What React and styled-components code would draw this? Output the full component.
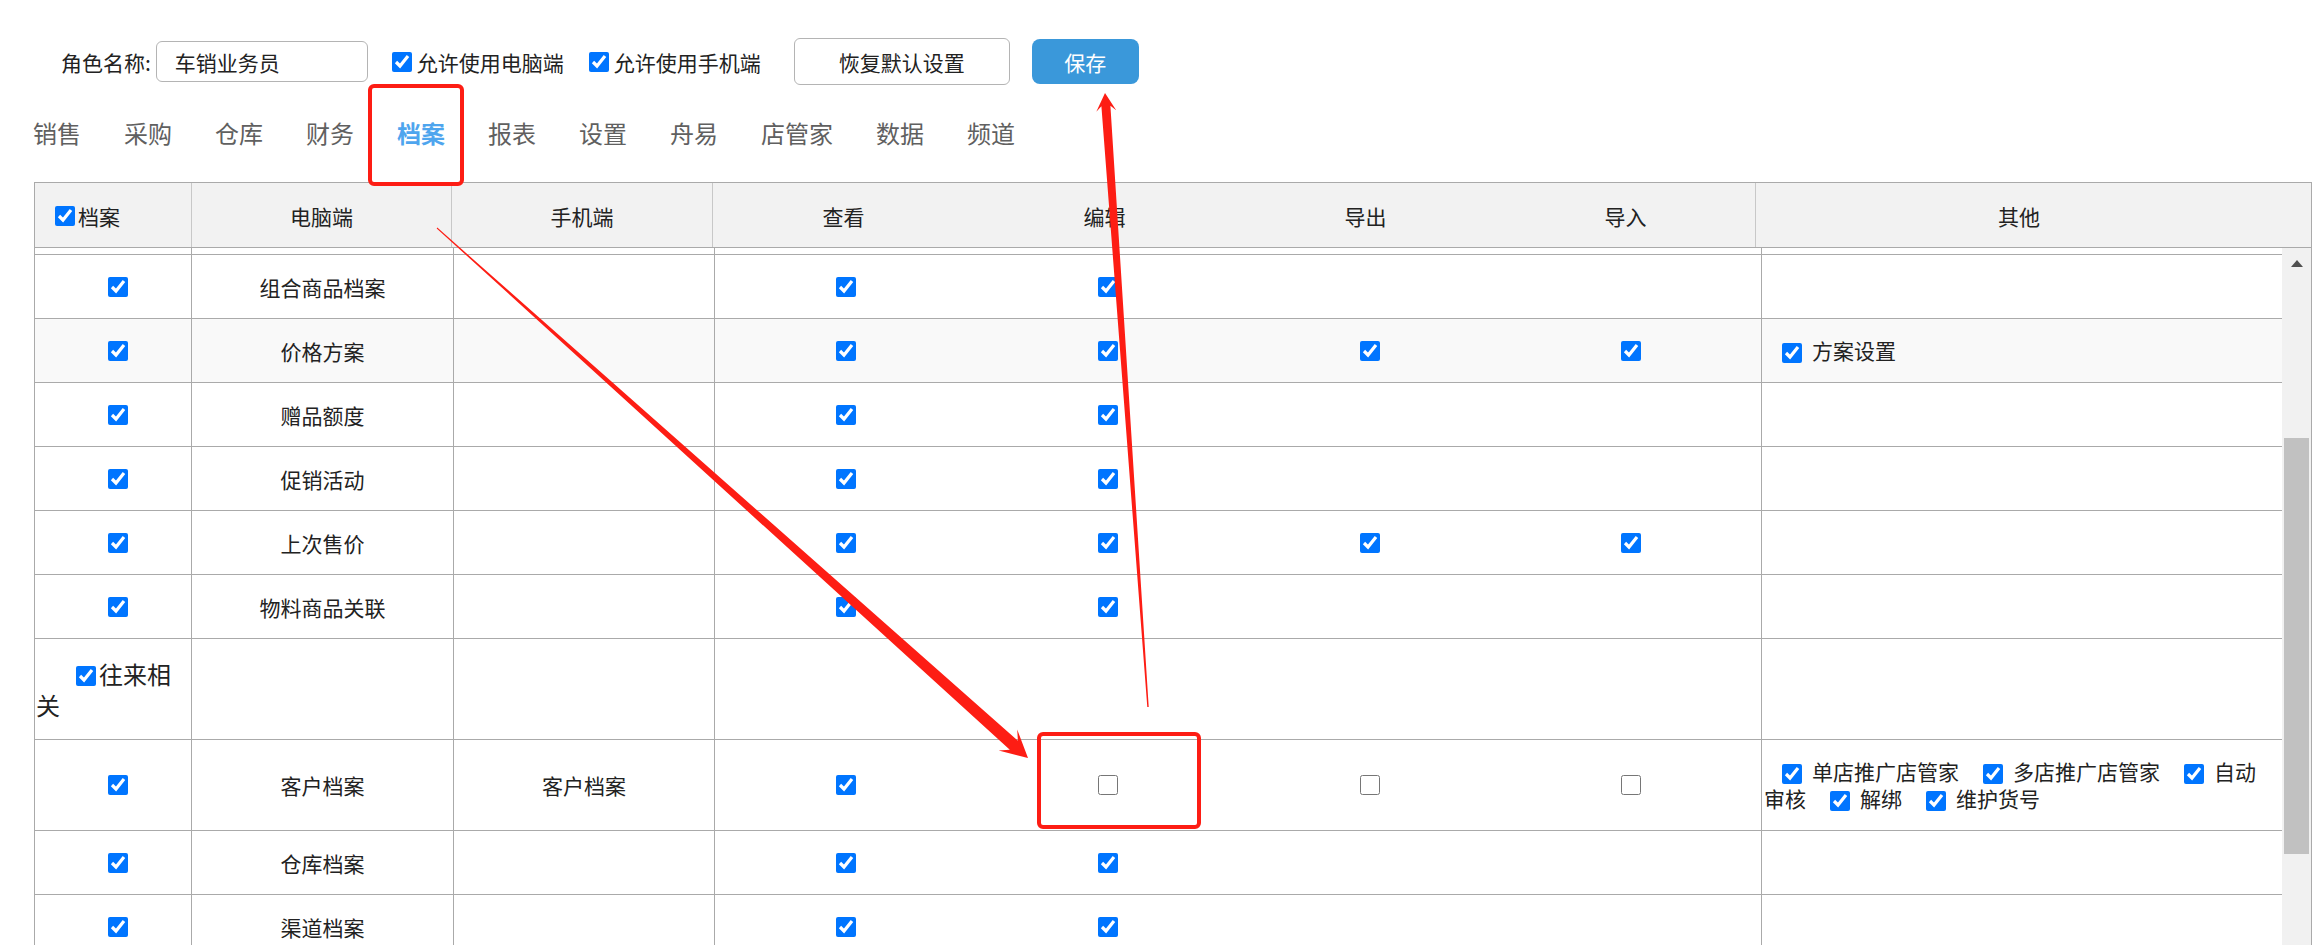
import React, { useLayoutEffect, useRef } from "react";
import styled, { createGlobalStyle } from "styled-components";

const GlobalStyle = createGlobalStyle`
  html, body {
    margin: 0;
    padding: 0;
    overflow: hidden;
    background: #fff;
  }
  body {
    font-family: "Noto Sans CJK SC", "Noto Sans", sans-serif;
    color: #222;
  }
  * {
    box-sizing: border-box;
  }
`;

const Page = styled.div`
  position: relative;
  width: 2318px;
  height: 945px;
  overflow: hidden;
`;

const Toolbar = styled.div`
  display: flex;
  align-items: center;
  height: 47px;
  margin-top: 38px;
  padding-left: 61px;
  font-size: 21px;
  color: #222;
`;

const FieldLabel = styled.span`
  margin-right: 5px;
`;

const NameInput = styled.input`
  width: 212px;
  height: 41px;
  padding: 0 18px;
  border: 1px solid #b4b4b4;
  border-radius: 6px;
  font: inherit;
  color: #222;
  outline: none;
`;

const Check = styled.input.attrs({ type: "checkbox", readOnly: true })`
  width: 20px;
  height: 20px;
  margin: 0;
  flex-shrink: 0;
  accent-color: #0075ff;
`;

const OptionLabel = styled.label`
  display: flex;
  align-items: center;
  gap: 5px;
  margin-left: ${(p) => p.$ml}px;
`;

const ResetButton = styled.button`
  width: 216px;
  height: 47px;
  margin-left: 33px;
  border: 1px solid #b4b4b4;
  border-radius: 6px;
  background: #fff;
  font: inherit;
  color: #222;
`;

const SaveButton = styled.button`
  width: 107px;
  height: 45px;
  margin-left: 22px;
  border: none;
  border-radius: 8px;
  background: #3a98da;
  font: inherit;
  color: #fff;
`;

const Tabs = styled.div`
  display: flex;
  align-items: center;
  gap: 43px;
  height: 97px;
  padding: 0 0 3px 33px;
  font-size: 24px;
`;

const Tab = styled.div`
  color: ${(p) => (p.$active ? "#4ea5ee" : "#606060")};
  font-weight: ${(p) => (p.$active ? 700 : 400)};
`;

const Table = styled.div`
  width: 2278px;
  margin-left: 34px;
  border: 1px solid #aaa;
  border-bottom: none;
  font-size: 21px;
`;

const HeadRow = styled.div`
  display: grid;
  grid-template-columns: 157px 260px 261px 261px 261px 261px 260px 1fr;
  height: 65px;
  background: #f2f2f2;
  border-bottom: 1px solid #aaa;
`;

const HeadCell = styled.div`
  display: flex;
  align-items: center;
  justify-content: ${(p) => (p.$left ? "flex-start" : "center")};
  gap: 3px;
  padding: 2px ${(p) => p.$pr || 0}px 0 ${(p) => (p.$left ? 20 : 0)}px;
  border-right: ${(p) => (p.$line ? "1px solid #c8c8c8" : "none")};
`;

const Body = styled.div`
  display: flex;
  height: 697px;
`;

const Viewport = styled.div`
  flex: 1;
  overflow: hidden;
`;

const Row = styled.div`
  display: grid;
  grid-template-columns: 157px 262px 261px 262px 262px 262px 261px 1fr;
  height: ${(p) => p.$h}px;
  background: ${(p) => (p.$shade ? "#f9f9f9" : "#fff")};
  border-bottom: 1px solid #aaa;
`;

const Cell = styled.div`
  display: flex;
  align-items: center;
  justify-content: center;
  min-width: 0;
  padding-left: ${(p) => p.$pl || 0}px;
  border-right: ${(p) => (p.$line ? "1px solid #aaa" : "none")};
`;

const GroupCell = styled(Cell)`
  justify-content: flex-start;
  padding: 0 0 0 1px;
  font-size: 24px;
  line-height: 31px;
`;

const GroupCheck = styled(Check)`
  display: inline-block;
  margin: 0 3px 0 40px;
  vertical-align: -2px;
`;

const ExtraCell = styled(Cell)`
  justify-content: flex-start;
  padding: 0 8px 0 2px;
  line-height: 27px;
`;

const ExtraItem = styled.span`
  margin-left: 24px;
  &:first-child {
    margin-left: 18px;
  }
`;

const ExtraCheck = styled(Check)`
  display: inline-block;
  margin: 0 10px 0 0;
  vertical-align: -4px;
`;

const ScrollTrack = styled.div`
  display: flex;
  flex-direction: column;
  align-items: center;
  width: 29px;
  padding-top: 12px;
  background: #f1f1f1;
`;

const ScrollUp = styled.div`
  width: 0;
  height: 0;
  border-left: 6.5px solid transparent;
  border-right: 6.5px solid transparent;
  border-bottom: 7px solid #505050;
`;

const ScrollThumb = styled.div`
  width: 25px;
  height: 416px;
  margin-top: 171px;
  background: #c1c1c1;
`;

const Overlay = styled.svg`
  position: absolute;
  left: 0;
  top: 0;
  pointer-events: none;
`;

const tabs = ["销售", "采购", "仓库", "财务", "档案", "报表", "设置", "舟易", "店管家", "数据", "频道"];

// each row: name, mobile, [查看, 编辑, 导出, 导入] (null = no box), extras
const rows = [
  { name: "商品档案", perms: [true, true, true, true] },
  { name: "组合商品档案", perms: [true, true, null, null] },
  { name: "价格方案", perms: [true, true, true, true], extras: ["方案设置"], shade: true },
  { name: "赠品额度", perms: [true, true, null, null] },
  { name: "促销活动", perms: [true, true, null, null] },
  { name: "上次售价", perms: [true, true, true, true] },
  { name: "物料商品关联", perms: [true, true, null, null] },
  { group: "往来相关" },
  {
    name: "客户档案",
    mobile: "客户档案",
    perms: [true, false, false, false],
    extras: ["单店推广店管家", "多店推广店管家", "自动审核", "解绑", "维护货号"],
    h: 91,
  },
  { name: "仓库档案", perms: [true, true, null, null] },
  { name: "渠道档案", perms: [true, true, null, null] },
  { name: "供应商档案", perms: [true, true, null, null] },
];

function arrowPoints(tail, tip, w0, w1, headLen, headW, notch) {
  const dx = tip[0] - tail[0];
  const dy = tip[1] - tail[1];
  const len = Math.hypot(dx, dy);
  const ux = dx / len;
  const uy = dy / len;
  const nx = -uy;
  const ny = ux;
  const sx = tip[0] - ux * notch;
  const sy = tip[1] - uy * notch;
  const bx = tip[0] - ux * headLen;
  const by = tip[1] - uy * headLen;
  const pts = [
    [tip[0], tip[1]],
    [bx + nx * headW, by + ny * headW],
    [sx + (nx * w1) / 2, sy + (ny * w1) / 2],
    [tail[0] + (nx * w0) / 2, tail[1] + (ny * w0) / 2],
    [tail[0] - (nx * w0) / 2, tail[1] - (ny * w0) / 2],
    [sx - (nx * w1) / 2, sy - (ny * w1) / 2],
    [bx - nx * headW, by - ny * headW],
  ];
  return pts.map((p) => p.map((v) => v.toFixed(1)).join(",")).join(" ");
}

const Annotations = () => (
  <Overlay width="2318" height="945" viewBox="0 0 2318 945">
    <g fill="none" stroke="#fd1d14" strokeWidth="4">
      <rect x="370" y="86" width="92" height="98" rx="4" />
      <rect x="1039" y="734" width="160" height="93" rx="4" />
    </g>
    <g fill="#fd1d14">
      <polygon points={arrowPoints([437, 228], [1028, 758], 1, 12, 27, 14, 19)} />
      <polygon points={arrowPoints([1148, 707], [1105, 93], 1.5, 9, 18, 10, 13)} />
    </g>
  </Overlay>
);

const PermRow = ({ row }) => {
  if (row.group) {
    return (
      <Row $h={101}>
        <GroupCell $line>
          <div>
            <GroupCheck defaultChecked />
            {row.group}
          </div>
        </GroupCell>
        <Cell $line />
        <Cell $line />
        <Cell />
        <Cell />
        <Cell />
        <Cell $line />
        <Cell />
      </Row>
    );
  }
  return (
    <Row $h={row.h || 64} $shade={row.shade}>
      <Cell $line $pl={9}>
        <Check defaultChecked />
      </Cell>
      <Cell $line>{row.name}</Cell>
      <Cell $line>{row.mobile}</Cell>
      {row.perms.map((p, i) => (
        <Cell key={i} $line={i === 3}>
          {p !== null && <Check defaultChecked={p} />}
        </Cell>
      ))}
      <ExtraCell>
        <div>
          {(row.extras || []).map((e) => (
            <ExtraItem key={e}>
              <ExtraCheck defaultChecked />
              {e}
            </ExtraItem>
          ))}
        </div>
      </ExtraCell>
    </Row>
  );
};

export default function App() {
  const viewportRef = useRef(null);

  useLayoutEffect(() => {
    if (viewportRef.current) viewportRef.current.scrollTop = 57;
  }, []);

  return (
    <Page>
      <GlobalStyle />
      <Toolbar>
        <FieldLabel>角色名称:</FieldLabel>
        <NameInput defaultValue="车销业务员" readOnly />
        <OptionLabel $ml={24}>
          <Check defaultChecked />
          允许使用电脑端
        </OptionLabel>
        <OptionLabel $ml={25}>
          <Check defaultChecked />
          允许使用手机端
        </OptionLabel>
        <ResetButton>恢复默认设置</ResetButton>
        <SaveButton>保存</SaveButton>
      </Toolbar>

      <Tabs>
        {tabs.map((t) => (
          <Tab key={t} $active={t === "档案"}>
            {t}
          </Tab>
        ))}
      </Tabs>

      <Table>
        <HeadRow>
          <HeadCell $left $line>
            <Check defaultChecked />
            档案
          </HeadCell>
          <HeadCell $line>电脑端</HeadCell>
          <HeadCell $line>手机端</HeadCell>
          <HeadCell>查看</HeadCell>
          <HeadCell>编辑</HeadCell>
          <HeadCell>导出</HeadCell>
          <HeadCell $line>导入</HeadCell>
          <HeadCell $pr={29}>其他</HeadCell>
        </HeadRow>
        <Body>
          <Viewport ref={viewportRef}>
            {rows.map((r, i) => (
              <PermRow key={i} row={r} />
            ))}
          </Viewport>
          <ScrollTrack>
            <ScrollUp />
            <ScrollThumb />
          </ScrollTrack>
        </Body>
      </Table>

      <Annotations />
    </Page>
  );
}
